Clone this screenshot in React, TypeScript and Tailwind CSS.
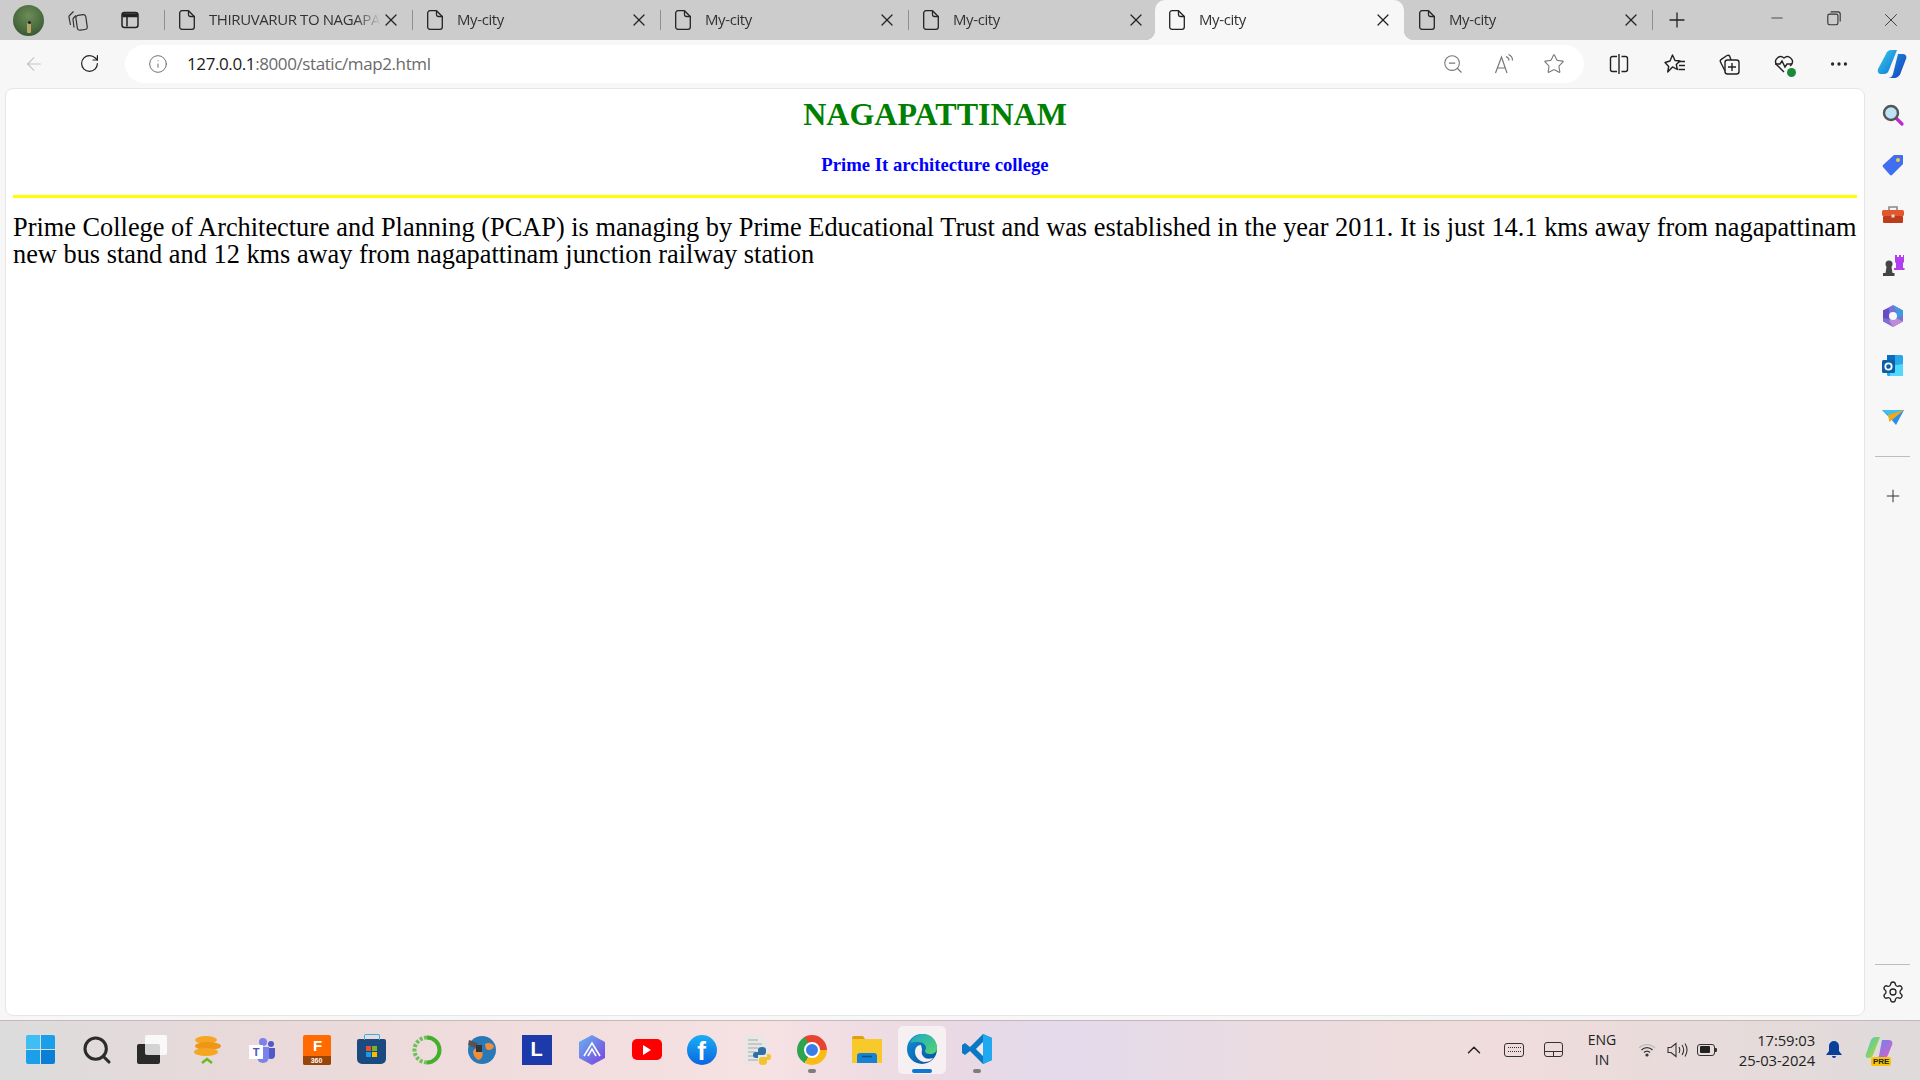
import type { ReactNode } from "react";
import { ChevronUp, Minus, MoreHorizontal, Plus, RotateCw, Settings, Star, X, ArrowLeft, Info, ZoomOut, Search } from "lucide-react";

const uiFont = "font-['Open_Sans','Noto_Sans',sans-serif]";

function PageIcon() {
  return (
    <svg viewBox="0 0 16 20" className="h-[20px] w-[16px] shrink-0" fill="none" stroke="#222" strokeWidth="1.3" strokeLinejoin="round">
      <path d="M3 .7h6.5l5.8 5.8V17a2.3 2.3 0 0 1-2.3 2.3H3A2.3 2.3 0 0 1 .7 17V3A2.3 2.3 0 0 1 3 .7z" />
      <path d="M9.5.7v4a1.8 1.8 0 0 0 1.8 1.8h4" />
    </svg>
  );
}

function Tab({ title, active, hideSep }: { title: string; active?: boolean; hideSep?: boolean }) {
  return (
    <div className={`relative flex shrink-0 items-center pl-[14px] pr-[11px] ${active ? "-ml-[2px] mr-[1px] h-full w-[249px] rounded-t-[10px] bg-[#f7f7f7]" : hideSep ? "h-[20px] w-[248px]" : "h-[20px] w-[248px] border-r border-[#8f8f8f]"}`}>
      {active && <div className="absolute -left-[10px] bottom-0 h-[10px] w-[10px] bg-[radial-gradient(circle_at_0_0,#cccccc_10px,#f7f7f7_10.5px)]" />}
      {active && <div className="absolute -right-[10px] bottom-0 h-[10px] w-[10px] bg-[radial-gradient(circle_at_100%_0,#cccccc_10px,#f7f7f7_10.5px)]" />}
      <PageIcon />
      <div className="mb-[2px] ml-[14px] flex-1 overflow-hidden whitespace-nowrap text-[15px] leading-[20px] tracking-[-0.4px] text-[#333] [mask-image:linear-gradient(90deg,#000_85%,transparent)]">{title}</div>
      <X className="h-[20px] w-[20px] shrink-0 text-[#222]" strokeWidth={1.5} />
    </div>
  );
}

function TabStrip() {
  return (
    <div className="flex h-[40px] items-center bg-[#cccccc]">
      <div className="relative ml-[13px] h-[31px] w-[31px] overflow-hidden rounded-full bg-[radial-gradient(circle_at_50%_35%,#6d8c58,#46683c_60%,#2a4630)]">
        <div className="absolute bottom-[3px] left-[14px] h-[10px] w-[4px] rounded-[1px] bg-[#b9a468]" />
        <div className="absolute bottom-[12px] left-[14.5px] h-[3px] w-[3px] rounded-full bg-[#222]" />
      </div>
      <div className="ml-[23px] w-[21px]">
        <svg viewBox="0 0 21 21" className="h-[21px] w-[21px]" fill="none" stroke="#333" strokeWidth="1.2">
          <rect x="9.5" y="5" width="10" height="15" rx="2.5" transform="rotate(-8 14 12)" />
          <path d="M9 5.5 6.5 8a2 2 0 0 0-.5 1.5l1 8M6.500 1.500 2.500 5.500A2 2 0 0 0 2 7.500l1.500 7.500" />
        </svg>
      </div>
      <div className="ml-[32px] w-[20px]">
        <svg viewBox="0 0 20 20" className="h-[20px] w-[20px]" fill="none" stroke="#222" strokeWidth="1.5">
          <rect x="2" y="2.5" width="16" height="15" rx="2.5" />
          <path d="M3 4h14v2.5H3z" fill="#222" />
          <path d="M7 6.5v10" />
        </svg>
      </div>
      <div className="ml-[24px] h-[20px] border-l border-[#8f8f8f]" />
      <div className={`flex h-full items-center ${uiFont}`}>
        <Tab title="THIRUVARUR TO NAGAPATTINAM" />
        <Tab title="My-city" />
        <Tab title="My-city" />
        <Tab title="My-city" hideSep />
        <Tab title="My-city" active />
        <Tab title="My-city" />
      </div>
      <Plus className="ml-[12px] h-[24px] w-[24px] text-[#222]" strokeWidth={1.3} />
      <div className="ml-auto flex text-[#333]">
        <div className="flex w-[57px] justify-center"><Minus className="h-[18px] w-[18px]" strokeWidth={1.1} /></div>
        <div className="flex w-[57px] justify-center">
          <svg viewBox="0 0 16 16" className="h-[18px] w-[18px]" fill="none" stroke="#333" strokeWidth="1">
            <rect x="2.5" y="4.5" width="9" height="9.5" rx="1.5" />
            <path d="M5 2.5h6.5a2 2 0 0 1 2 2V11" />
          </svg>
        </div>
        <div className="mr-[1px] flex w-[57px] justify-center"><X className="h-[22px] w-[22px]" strokeWidth={1} /></div>
      </div>
    </div>
  );
}

function Toolbar() {
  return (
    <div className="flex h-[48px] items-center bg-[#f7f7f7] pb-[1px]">
      <ArrowLeft className="ml-[23px] h-[22px] w-[22px] text-[#c4c4c4]" strokeWidth={1.2} />
      <RotateCw className="ml-[34px] h-[21px] w-[21px] text-[#222]" strokeWidth={1.4} />
      <div className={`ml-[25px] flex h-[38px] w-[1459px] items-center rounded-full bg-white pl-[22px] ${uiFont}`}>
        <Info className="ml-[1px] h-[20px] w-[20px] text-[#555]" strokeWidth={1} />
        <div className="ml-[19px] text-[17px] tracking-[-0.4px] text-[#1a1a1a]">127.0.0.1<span className="text-[#6a6a6a]">:8000/static/map2.html</span></div>
        <div className="ml-auto flex items-center pr-[19px] text-[#777]">
          <ZoomOut className="h-[22px] w-[22px]" strokeWidth={1.2} />
          <svg viewBox="0 0 22 22" className="ml-[29px] h-[22px] w-[22px]" fill="none" stroke="#777" strokeWidth="1.2">
            <path d="M2.5 20 8.500 4l5.500 16M4.500 15h8" />
            <path d="M13 3.500c2 .8 3 2.200 3 4M15.500 1.500c2.500 1 4 3.400 4 6" />
          </svg>
          <Star className="ml-[28px] h-[22px] w-[22px]" strokeWidth={1.2} />
        </div>
      </div>
      <div className="flex items-center">
        <div className="ml-[24px] w-[22px]">
          <svg viewBox="0 0 22 22" className="h-[22px] w-[22px]" fill="none" stroke="#222" strokeWidth="1.4">
            <path d="M9 3.500H4.500a2 2 0 0 0-2 2v11a2 2 0 0 0 2 2H9M13.500 3.500h4a2 2 0 0 1 2 2v11a2 2 0 0 1-2 2h-4M11 1v20" />
          </svg>
        </div>
        <div className="ml-[34px] w-[22px]">
          <svg viewBox="0 0 22 22" className="h-[22px] w-[22px]" fill="none" stroke="#222" strokeWidth="1.4" strokeLinejoin="round">
            <path d="M8.500 2 11 7.500l5 .5-3.700 3.500 1 5-4.800-2.600L3.700 19l1-5.500L1 9.500l5-1.500z" />
            <path d="M14 8.500h7M15 12.500h6M14.500 16.500h6.500" />
          </svg>
        </div>
        <div className="ml-[32px] w-[22px]">
          <svg viewBox="0 0 22 22" className="h-[22px] w-[22px]" fill="none" stroke="#222" strokeWidth="1.4">
            <rect x="7" y="7" width="14" height="14" rx="2.5" />
            <path d="M14 10v8M10 14h8" />
            <path d="M7 18 2.500 9a2 2 0 0 1 .8-2.600L9 2.500a2 2 0 0 1 2.700.7L13 7" />
          </svg>
        </div>
        <div className="relative ml-[33px] w-[22px]">
          <svg viewBox="0 0 22 22" className="h-[22px] w-[22px]" fill="none" stroke="#222" strokeWidth="1.4">
            <path d="M11 19 3.500 11.500A5 5 0 0 1 11 5a5 5 0 0 1 7.500 6.500L17 13" />
            <path d="M2 11h5l2-3 3 6 2-3h5" />
          </svg>
          <div className="absolute -bottom-[2px] -right-[1px] h-[9px] w-[9px] rounded-full bg-[#1a8a3a]" />
        </div>
        <MoreHorizontal className="ml-[33px] h-[22px] w-[22px] text-[#222]" strokeWidth={1.6} />
        <div className="ml-[27px] w-[30px]">
          <svg viewBox="0 0 30 32" className="h-[32px] w-[30px]">
            <defs>
              <linearGradient id="cp1" x1="0" y1="0" x2="1" y2="1"><stop offset="0" stopColor="#39d0e8" /><stop offset="1" stopColor="#0f6fd8" /></linearGradient>
              <linearGradient id="cp2" x1="0" y1="0" x2="1" y2="1"><stop offset="0" stopColor="#1592d8" /><stop offset="1" stopColor="#1b3fc4" /></linearGradient>
            </defs>
            <path d="M9 6c1-3 3-4 5-4h6l-8 20c-1 3-3 4-5 4H4C2 26 0 24 1 21z" fill="url(#cp1)" />
            <path d="M21 6h5c3 0 4 3 3 5l-5 13c-1 4-4 6-7 6h-6c2 0 4-1 5-4z" fill="url(#cp2)" />
          </svg>
        </div>
      </div>
    </div>
  );
}

function SideIcon({ children }: { children: ReactNode }) {
  return <div className="flex h-[50.2px] w-full items-center justify-center">{children}</div>;
}

function Sidebar() {
  return (
    <div className="flex w-[55px] shrink-0 flex-col items-center pb-[2px] pt-[2px]">
      <SideIcon>
        <svg viewBox="0 0 24 24" className="h-[24px] w-[24px]">
          <path d="m15 15 6 6" stroke="#c026d3" strokeWidth="3.2" strokeLinecap="round" />
          <circle cx="10" cy="10" r="7" fill="#bfe3f5" stroke="#555" strokeWidth="2.4" />
        </svg>
      </SideIcon>
      <SideIcon>
        <svg viewBox="0 0 24 24" className="h-[24px] w-[24px]">
          <path d="M13 2h8a1 1 0 0 1 1 1v8L11 22a1.500 1.500 0 0 1-2 0L2 14a1.500 1.500 0 0 1 0-2z" fill="#3f6ff0" />
          <circle cx="17" cy="7" r="2" fill="#f2c94c" />
        </svg>
      </SideIcon>
      <SideIcon>
        <svg viewBox="0 0 24 24" className="h-[24px] w-[24px]">
          <path d="M8 7V4h8v3" fill="none" stroke="#888" strokeWidth="1.6" />
          <rect x="1" y="7" width="22" height="6" rx="1.5" fill="#e4572e" />
          <rect x="2" y="13" width="20" height="7" rx="1" fill="#bd3d1a" />
          <rect x="10.5" y="11.5" width="3" height="3" fill="#ddd" />
        </svg>
      </SideIcon>
      <SideIcon>
        <svg viewBox="0 0 24 24" className="h-[24px] w-[24px]">
          <path d="M14 1h2v2h2V1h2v2h2V1h1v7l-1 1v5h1.500v2H13v-2h2V9l-1-1z" fill="#b13ff0" />
          <circle cx="8" cy="10" r="3.5" fill="#444" />
          <path d="M5.500 13h5l1 6h2v3H2v-3h2.500z" fill="#444" />
        </svg>
      </SideIcon>
      <SideIcon>
        <svg viewBox="0 0 24 24" className="h-[24px] w-[24px]">
          <path d="M12 1 22 6.500v11L12 23 2 17.500v-11z" fill="#7b6fd6" />
          <path d="M12 1 22 6.500v5l-6 3V9z" fill="#3f9be0" />
          <path d="M2 14V6.500L8 4v11z" fill="#6a4cc2" />
          <path d="M12 23 22 17.500l-6-3-8 2z" fill="#c08ad8" />
          <circle cx="12" cy="12" r="4" fill="#f7f7f7" />
        </svg>
      </SideIcon>
      <SideIcon>
        <svg viewBox="0 0 24 24" className="h-[24px] w-[24px]">
          <rect x="6" y="1" width="16" height="21" rx="1.5" fill="#28a8ea" />
          <path d="M6 1h8v7H6z" fill="#0f6cbd" />
          <path d="m9 12 13-2v10a2 2 0 0 1-2 2H9z" fill="#50d9ff" />
          <rect x="1" y="6" width="13" height="13" rx="1.5" fill="#0a5fa8" />
          <circle cx="7.5" cy="12.5" r="3.2" fill="none" stroke="#fff" strokeWidth="1.8" />
        </svg>
      </SideIcon>
      <SideIcon>
        <svg viewBox="0 0 24 24" className="h-[24px] w-[24px]">
          <path d="M1 6h22L15 21l-5-6z" fill="#2a8fe8" />
          <path d="M1 6h22L8 11.500z" fill="#3fc0ee" />
          <path d="M23 6 7 11l1.500 7z" fill="#f0a81c" />
        </svg>
      </SideIcon>
      <div className="mt-[15px] w-[35px] border-t border-[#bdbdbd]" />
      <Plus className="mt-[29px] h-[20px] w-[20px] text-[#333]" strokeWidth={1.2} />
      <div className="mt-auto w-[35px] border-t border-[#bdbdbd]" />
      <Settings className="mt-[15px] mb-[10px] h-[24px] w-[24px] text-[#222]" strokeWidth={1.3} />
    </div>
  );
}

function TaskIcon({ children, active, dot }: { children: ReactNode; active?: boolean; dot?: boolean }) {
  return (
    <div className={`relative mx-[3.5px] flex h-[48px] w-[48px] items-center justify-center rounded-[5px] ${active ? "bg-[#f6f0f2]" : ""}`}>
      {children}
      {dot && <div className="absolute bottom-[1px] h-[4px] w-[8px] rounded-full bg-[#7d7d7d]" />}
      {active && <div className="absolute bottom-[1px] h-[4px] w-[20px] rounded-full bg-[#0a78d4]" />}
    </div>
  );
}

function Taskbar() {
  return (
    <div className="mt-[4px] flex h-[60px] items-center border-t border-[#c6b8ba] bg-[linear-gradient(90deg,#dcdcdc_0%,#e8d9da_12%,#f0dcdc_25%,#f6e1e3_40%,#e9d9e4_50%,#e3daec_55%,#ecdcdf_68%,#f0dcdc_78%,#dfdada_100%)] pb-[2px] pl-[14px]">
      <TaskIcon>
        <div className="mr-[3px] grid h-[29px] w-[29px] grid-cols-2 gap-[1px]">
          <div className="rounded-tl-[2px] bg-[#3fbdf5]" />
          <div className="rounded-tr-[2px] bg-[#1aa0ea]" />
          <div className="rounded-bl-[2px] bg-[#1aa0ea]" />
          <div className="rounded-br-[2px] bg-[#0a7fd8]" />
        </div>
      </TaskIcon>
      <TaskIcon><Search className="ml-[1px] h-[32px] w-[32px] text-[#2b2b2b]" strokeWidth={2.3} /></TaskIcon>
      <TaskIcon>
        <div className="relative h-[29px] w-[30px]">
          <div className="absolute bottom-0 left-0 h-[20px] w-[23px] rounded-[2px] bg-[#2a2a2a]" />
          <div className="absolute right-0 top-0 h-[20px] w-[22px] rounded-[2px] bg-white/80" />
        </div>
      </TaskIcon>
      <TaskIcon>
        <svg viewBox="0 0 30 30" className="h-[30px] w-[30px]">
          <ellipse cx="14" cy="5" rx="11" ry="4" fill="#f5a623" />
          <ellipse cx="16" cy="11" rx="13" ry="4" fill="#ef9518" />
          <ellipse cx="14" cy="17" rx="12" ry="4" fill="#f5a623" />
          <path d="m10 28 5-4 5 4" fill="none" stroke="#6cba1c" strokeWidth="2.5" />
        </svg>
      </TaskIcon>
      <TaskIcon>
        <svg viewBox="0 0 28 28" className="h-[28px] w-[28px]">
          <circle cx="23" cy="8" r="3" fill="#5059c9" />
          <path d="M19 12h8v7a4 4 0 0 1-8 0z" fill="#5059c9" />
          <circle cx="15" cy="6" r="4" fill="#7b83eb" />
          <path d="M9 11h12v10a6 6 0 0 1-12 0z" fill="#7b83eb" />
          <rect x="1" y="9" width="14" height="14" fill="#fff" />
          <text x="8" y="20" textAnchor="middle" fontSize="11" fontWeight="700" fill="#4b53bc" fontFamily="Liberation Sans">T</text>
        </svg>
      </TaskIcon>
      <TaskIcon>
        <div className="flex h-[30px] w-[28px] flex-col overflow-hidden rounded-[2px] bg-[#ff6b00] text-white">
          <div className="flex flex-1 items-center justify-center pl-[2px] font-['Liberation_Sans'] text-[15px] font-bold leading-none">F</div>
          <div className="h-[9px] bg-[#9a4508] text-center font-['Liberation_Sans'] text-[7px] font-bold leading-[9px]">360</div>
        </div>
      </TaskIcon>
      <TaskIcon>
        <div className="relative mt-[3px] flex h-[25px] w-[29px] items-center justify-center rounded-b-[5px] rounded-t-[2px] bg-[#1b4a80]">
          <div className="absolute -top-[5px] h-[6px] w-[16px] rounded-t-[2px] border-[1.5px] border-b-0 border-[#29b5e8]" />
          <div className="grid h-[11px] w-[11px] grid-cols-2 gap-[1px]">
            <div className="bg-[#e8502a]" /><div className="bg-[#7ab51d]" />
            <div className="bg-[#0ea0e8]" /><div className="bg-[#ffb900]" />
          </div>
        </div>
      </TaskIcon>
      <TaskIcon>
        <svg viewBox="0 0 30 30" className="h-[30px] w-[30px]" fill="none" strokeWidth="4">
          <path d="M15 2.500a12.500 12.500 0 0 1 0 25" stroke="#43b02a" />
          <path d="M15 27.500A12.500 12.500 0 0 1 15 2.500" stroke="#6fbf5c" strokeDasharray="3 1.5" />
        </svg>
      </TaskIcon>
      <TaskIcon>
        <svg viewBox="0 0 30 30" className="h-[30px] w-[30px]">
          <circle cx="15" cy="15" r="14" fill="#2a78b8" />
          <path d="M6 16c3-4 6-3 9 0 2 5-1 9-4 9-3-2-5-5-5-9zM18 9c3-2 7-1 9 2-1 4-5 5-8 3z" fill="#ef8f3a" />
          <path d="M2 5l9 3-3 5-7-3z" fill="#555" />
          <path d="M9 10h6v7H9z" fill="#333" />
        </svg>
      </TaskIcon>
      <TaskIcon>
        <div className="flex h-[30px] w-[30px] items-center justify-center bg-[#1c3aa9] pb-[1px] font-['Liberation_Sans'] text-[20px] font-bold text-white">L</div>
      </TaskIcon>
      <TaskIcon>
        <svg viewBox="0 0 28 30" className="h-[30px] w-[28px]">
          <defs>
            <linearGradient id="hx" x1="0" y1="0" x2="1" y2="1"><stop offset="0" stopColor="#64b5f0" /><stop offset="1" stopColor="#7b3fe0" /></linearGradient>
          </defs>
          <path d="M14 0 27 7v16l-13 7L1 23V7z" fill="url(#hx)" />
          <path d="M6 21 14 8l8 13M10 21l4-7 4 7" fill="none" stroke="#fff" strokeWidth="1.6" />
        </svg>
      </TaskIcon>
      <TaskIcon>
        <div className="flex h-[21px] w-[30px] items-center justify-center rounded-[5px] bg-[#ff0000]">
          <div className="ml-[1px] h-0 w-0 border-y-[5px] border-l-[8px] border-y-transparent border-l-white" />
        </div>
      </TaskIcon>
      <TaskIcon>
        <div className="flex h-[30px] w-[30px] items-center justify-center overflow-hidden rounded-full bg-[linear-gradient(180deg,#1aaef5,#0a66e0)] pt-[4px] font-['Liberation_Sans'] text-[26px] font-bold text-white">f</div>
      </TaskIcon>
      <TaskIcon>
        <svg viewBox="0 0 28 30" className="h-[30px] w-[28px]">
          <path d="M2 0h15l7 7v22H2z" fill="#e7e7e7" />
          <path d="M5 5h10M5 9h14M5 13h10M5 17h8M5 21h8M5 25h10" stroke="#bdbdbd" strokeWidth="1.5" />
          <path d="M19 12c-3 0-4 1-4 3v2h-2c-2 0-3 1-3 3 0 2 1 3 3 3h2v-3h5c2 0 3-1 3-3v-2c0-2-1-3-4-3z" fill="#2f6fa8" />
          <path d="M20 30c3 0 4-1 4-3v-2h2c1 0 2-1 2-3s-1-3-2-3h-2v3h-6c-1 0-2 1-2 3v2c0 2 1 3 4 3z" fill="#f2c230" />
        </svg>
      </TaskIcon>
      <TaskIcon dot>
        <div className="relative h-[30px] w-[30px] rounded-full bg-[conic-gradient(from_-30deg,#e8432e_0deg_120deg,#f9bc15_120deg_240deg,#2ea44f_240deg_360deg)]">
          <div className="absolute left-[7px] top-[7px] h-[16px] w-[16px] rounded-full border-[2px] border-white bg-[#3b7de8]" />
        </div>
      </TaskIcon>
      <TaskIcon>
        <svg viewBox="0 0 30 28" className="h-[28px] w-[30px]">
          <path d="M0 2a2 2 0 0 1 2-2h9l2 3h-13z" fill="#e0a010" />
          <path d="M0 3h30v24H0z" fill="#f8c92b" />
          <path d="M5 27v-7a3 3 0 0 1 3-3h14a3 3 0 0 1 3 3v7z" fill="#1682d4" />
          <path d="M10 20.500h10" stroke="#0b4f8a" strokeWidth="1.5" />
        </svg>
      </TaskIcon>
      <TaskIcon active>
        <svg viewBox="0 0 30 30" className="mb-[2px] h-[30px] w-[30px]">
          <defs>
            <linearGradient id="ed" x1="0" y1="0" x2="1" y2="1"><stop offset="0" stopColor="#1ba7c9" /><stop offset="1" stopColor="#58d66c" /></linearGradient>
            <linearGradient id="ed2" x1="0" y1="0" x2="1" y2="1"><stop offset="0" stopColor="#0e8fd8" /><stop offset="1" stopColor="#0a4f9c" /></linearGradient>
          </defs>
          <circle cx="15" cy="15" r="15" fill="url(#ed2)" />
          <path d="M3 9C6 2 12 0 16 0c8 0 14 6 14 14 0 4-3 6-7 6-3 0-5-1-5-3 0-1 1-2 1-3 0-3-3-6-8-6-3 0-6 0-8 1z" fill="url(#ed)" />
          <path d="M14 11c-4 0-6 3-6 7 0 5 4 9 9 10 4 0 7-1 9-4-3 1-6 1-8 0-3-2-4-5-3-8 0-2-1-4-1-5z" fill="#f6f0f2" />
        </svg>
      </TaskIcon>
      <TaskIcon dot>
        <svg viewBox="0 0 30 30" className="mb-[2px] h-[30px] w-[30px]">
          <path d="M21 0 30 4v22l-9 4L8 17l-5 4-3-2v-8l3-2 5 4z" fill="#0a78c2" />
          <path d="M21 0 30 4v22l-9 4zM21 8l-7 7 7 7z" fill="#20a8f0" />
          <path d="M21 8l-7 7 7 7z" fill="#f2e8ec" />
        </svg>
      </TaskIcon>
      <div className={`ml-auto flex h-full items-center text-[#222] ${uiFont}`}>
        <ChevronUp className="h-[22px] w-[22px]" strokeWidth={1.6} />
        <div className="ml-[19px] flex h-[14px] w-[20px] items-center justify-center rounded-[3px] border border-[#333]">
          <div className="h-[5px] w-[13px] border-y border-dotted border-[#333]" />
        </div>
        <div className="ml-[20px] flex h-[15px] w-[19px] flex-col rounded-[3px] border border-[#333]">
          <div className="flex-1 border-b border-[#333]" />
          <div className="mx-auto h-[4px] w-0 border-l border-[#333]" />
        </div>
        <div className="ml-[23px] w-[32px] text-center text-[14px] leading-[20px]">ENG<br />IN</div>
        <div className="ml-[20px] w-[18px]">
          <svg viewBox="0 0 18 14" className="h-[14px] w-[18px]" fill="none" stroke="#333" strokeWidth="1.2">
            <path d="M1 5a11 11 0 0 1 16 0" stroke="#bbb" />
            <path d="M3.500 7a7.500 7.500 0 0 1 11 0M6 9.500a4 4 0 0 1 6 0" />
            <circle cx="9" cy="12" r="1" fill="#333" />
          </svg>
        </div>
        <div className="ml-[11px] w-[21px]">
          <svg viewBox="0 0 21 16" className="h-[16px] w-[21px]" fill="none" stroke="#333" strokeWidth="1.1">
            <path d="M1 5.500h3L9 1.500v13L4 10.500H1z" />
            <path d="M12 5c1 2 1 4 0 6M15 3c2 3 2 7 0 10M18 1.500c2.500 4 2.500 9 0 13" />
          </svg>
        </div>
        <div className="ml-[9px] flex w-[21px] items-center">
          <div className="flex h-[12px] w-[18px] items-center rounded-[3px] border border-[#333] p-[1.5px]">
            <div className="h-full w-[10px] rounded-[1px] bg-[#222]" />
          </div>
          <div className="h-[4px] w-[2px] rounded-r-[1px] bg-[#333]" />
        </div>
        <div className="ml-[13px] w-[84px] whitespace-nowrap text-right text-[14.8px] leading-[20px] tracking-[-0.1px]">17:59:03<br />25-03-2024</div>
        <svg viewBox="0 0 16 18" className="ml-[11px] h-[18px] w-[16px]" fill="#0a3f9a">
          <path d="M8 0a5 5 0 0 1 5 5v5l3 4H0l3-4V5a5 5 0 0 1 5-5zM6 15h4a2 2 0 0 1-4 0z" />
        </svg>
        <div className="relative ml-[23px] mr-[27px] h-[28px] w-[28px]">
          <svg viewBox="0 0 28 24" className="h-[24px] w-[28px]">
            <defs>
              <linearGradient id="cp3" x1="0" y1="0" x2="1" y2="1"><stop offset="0" stopColor="#3fc3e8" /><stop offset="0.5" stopColor="#7fd36a" /><stop offset="1" stopColor="#e8c84a" /></linearGradient>
              <linearGradient id="cp4" x1="0" y1="0" x2="1" y2="1"><stop offset="0" stopColor="#5a8cf0" /><stop offset="1" stopColor="#e85ac8" /></linearGradient>
            </defs>
            <path d="M6 4c1-2 3-3 4-3h5l-7 18c-1 2-2 3-4 3H3c-2 0-3-2-2-4z" fill="url(#cp3)" />
            <path d="M17 4h7c3 0 4 3 3 5l-4 10c-1 2-3 4-5 4h-8c2 0 3-1 4-3z" fill="url(#cp4)" />
          </svg>
          <div className="absolute -bottom-[2px] left-[6px] h-[9px] rounded-[2px] bg-[#f7c600] px-[2px] font-['Liberation_Sans'] text-[8px] font-bold leading-[9px] text-[#222]">PRE</div>
        </div>
      </div>
    </div>
  );
}

export default function App() {
  return (
    <div className="flex h-[1080px] w-[1920px] flex-col overflow-hidden bg-[#f7f7f7]">
      <TabStrip />
      <Toolbar />
      <div className="flex min-h-0 flex-1">
        <main className="ml-[5px] w-[1860px] rounded-[8px] border border-[#e6e6e6] bg-white px-[7px] font-['Liberation_Serif',serif] text-black">
          <h1 className="mt-[7px] text-center text-[32px] font-bold leading-[37px] text-[#008000]">NAGAPATTINAM</h1>
          <h3 className="mt-[21px] text-center text-[18.72px] font-bold leading-[21px] text-[#0000ff]">Prime It architecture college</h3>
          <div className="mt-[20px] h-[3px] bg-[#ffff00]" />
          <p className="mt-[16px] text-[26.35px] leading-[27px]">
            Prime College of Architecture and Planning (PCAP) is managing by Prime Educational Trust and was established in the year 2011. It is just 14.1 kms away from nagapattinam new bus stand and 12 kms away from nagapattinam junction railway station
          </p>
        </main>
        <Sidebar />
      </div>
      <Taskbar />
    </div>
  );
}
